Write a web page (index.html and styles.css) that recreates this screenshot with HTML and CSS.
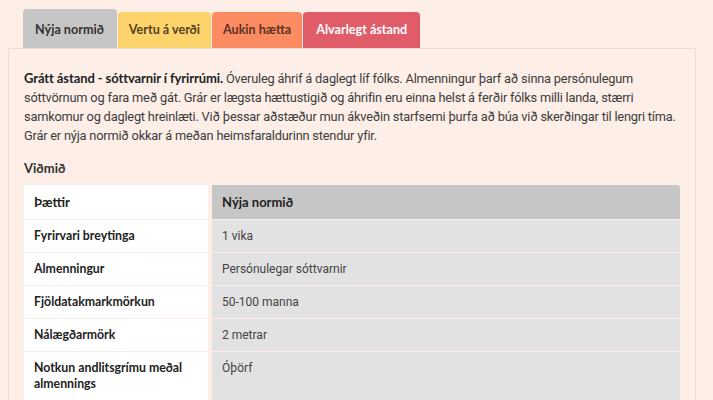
FILE: index.html
```html
<!DOCTYPE html>
<html lang="is">
<head>
  <meta charset="UTF-8">
  <meta name="viewport" content="width=device-width, initial-scale=1.0">
  <title>Viðvörunarstig</title>
  <link rel="stylesheet" href="styles.css">
</head>
<body>
  <div class="tabs">
    <div class="tab tab-grey active">Nýja normið</div>
    <div class="tab tab-yellow">Vertu á verði</div>
    <div class="tab tab-orange">Aukin hætta</div>
    <div class="tab tab-red">Alvarlegt ástand</div>
  </div>

  <div class="panel">
    <p class="intro">
      <strong>Grátt ástand - sóttvarnir í fyrirrúmi.</strong> Óveruleg áhrif á daglegt líf fólks. Almenningur þarf að sinna persónulegum sóttvörnum og fara með gát. Grár er lægsta hættustigið og áhrifin eru einna helst á ferðir fólks milli landa, stærri samkomur og daglegt hreinlæti. Við þessar aðstæður mun ákveðin starfsemi þurfa að búa við skerðingar til lengri tíma. Grár er nýja normið okkar á meðan heimsfaraldurinn stendur yfir.
    </p>

    <h3 class="section-title">Viðmið</h3>

    <div class="criteria">
      <div class="cell label head">Þættir</div>
      <div class="cell value head top-right">Nýja normið</div>

      <div class="cell label">Fyrirvari breytinga</div>
      <div class="cell value">1 vika</div>

      <div class="cell label">Almenningur</div>
      <div class="cell value">Persónulegar sóttvarnir</div>

      <div class="cell label">Fjöldatakmarkmörkun</div>
      <div class="cell value">50-100 manna</div>

      <div class="cell label">Nálægðarmörk</div>
      <div class="cell value">2 metrar</div>

      <div class="cell label">Notkun andlitsgrímu meðal almennings</div>
      <div class="cell value">Óþörf</div>
    </div>
  </div>
</body>
</html>
```

FILE: styles.css
```css
body {
  margin: 0;
  padding: 9px 17px 0 8px;
  background: #fdeee7;
  font-family: Roboto, "Liberation Sans", Arial, sans-serif;
  color: #333;
}
.tabs {
  display: flex;
  align-items: flex-end;
  gap: 1px;
  margin-left: 15px;
}
.tab {
  font-family: Lato, "Noto Sans", sans-serif;
  font-weight: 700;
  font-size: 12.6px;
  height: 36px;
  line-height: 36px;
  padding: 0 11px;
  border-radius: 4px 4px 0 0;
  color: #333;
}
.tab.active {
  height: 39px;
  padding: 3px 13px 0 12px;
  box-sizing: border-box;
}
.tab-grey { background: #c6c6c6; }
.tab-yellow { background: #fdd36b; color: #563f22; }
.tab-orange { background: #fb8c62; color: #5a3122; }
.tab-red { background: #e05c69; color: #fff; padding: 0 13px; }

.panel {
  border: 1px solid #f1dbd1;
  background: #fdeee7;
  padding: 20px 15px 0 15px;
}
.intro {
  margin: 0;
  font-size: 12.8px;
  letter-spacing: -0.2px;
  line-height: 19px;
  color: #3d3d3d;
}
.intro strong {
  font-family: Lato, "Noto Sans", sans-serif;
  font-size: 13px;
  letter-spacing: -0.1px;
  color: #222;
}
.section-title {
  font-family: Lato, "Noto Sans", sans-serif;
  font-size: 13px;
  font-weight: 700;
  color: #333;
  margin: 15px 0 9px 0;
}
.criteria {
  display: grid;
  grid-template-columns: 184px 1fr;
  column-gap: 4px;
  row-gap: 1px;
}
.cell {
  font-size: 12px;
  line-height: 16px;
  padding: 8px 10px;
}
.label {
  background: #fff;
  font-family: Lato, "Noto Sans", sans-serif;
  font-weight: 700;
  font-size: 12.3px;
  color: #222;
}
.value {
  background: #e2e2e2;
  color: #444;
}
.cell.head {
  font-family: Lato, "Noto Sans", sans-serif;
  font-weight: 700;
  font-size: 13px;
  padding: 9px 10px;
  color: #222;
}
.value.head {
  background: #c6c6c6;
}
.top-right {
  border-radius: 0 3px 0 0;
}
```
